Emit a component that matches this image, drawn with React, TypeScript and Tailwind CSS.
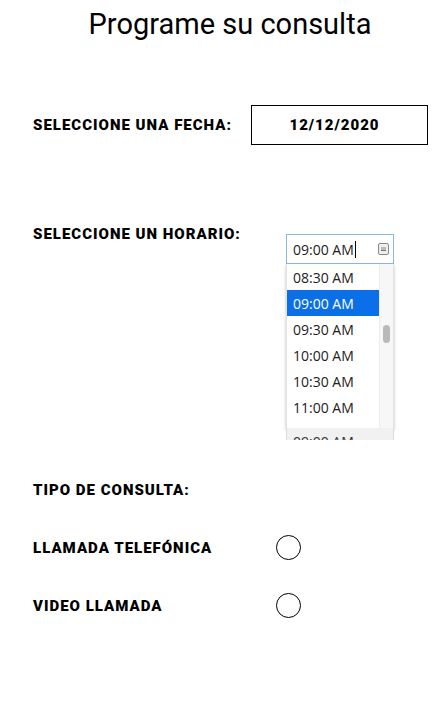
import { useState } from 'react';

const times = ['08:30 AM', '09:00 AM', '09:30 AM', '10:00 AM', '10:30 AM', '11:00 AM'];

const labelClass = "text-[15px] font-black uppercase leading-[18px] text-black tracking-[1px]";

const App = () => {
  const [selected, setSelected] = useState('09:00 AM');
  const [tipo, setTipo] = useState<string | null>(null);

  return (
    <div className="min-h-[704px] w-[446px] bg-white font-['Roboto',sans-serif] text-black">
      <div className="flex h-[48px] items-center justify-center pl-[14px]">
        <h1 className="text-[29px] font-normal leading-none">Programe su consulta</h1>
      </div>

      <div className="mt-[57px] flex h-[40px] items-center pl-[33px]">
        <span className={`${labelClass} w-[218px]`}>Seleccione una fecha:</span>
        <div className="flex h-[40px] w-[177px] items-center justify-center border border-black pr-[10px] text-[15px] font-black tracking-[1px]">
          12/12/2020
        </div>
      </div>

      <div className="mt-[80px] flex items-start pl-[33px]">
        <span className={`${labelClass} w-[253px]`}>Seleccione un horario:</span>
        <div className="mt-[9px] w-[108px] font-['Open_Sans',sans-serif] text-[14px] text-[#222]">
          <div className="flex h-[30px] items-center justify-between border border-[#8db6e6] pl-[6px] pr-[4px]">
            <span className="flex items-center">
              {selected}
              <span className="ml-[1px] inline-block h-[17px] w-[1px] bg-black" />
            </span>
            <span className="flex h-[12px] w-[11px] items-center justify-center rounded-[2px] border border-[#8a8a8a] bg-[#eee]">
              <span className="h-[4px] w-[5px] border-b border-[#777] bg-[#bbb]" />
            </span>
          </div>
          <div className="flex h-[164px] border-x border-[#e3e3e3] bg-white shadow-[0_2px_3px_rgba(0,0,0,0.25)]">
            <ul className="w-[92px]">
              {times.map((t) => (
                <li
                  key={t}
                  onClick={() => setSelected(t)}
                  className={
                    t === selected
                      ? 'flex h-[26px] cursor-default items-center bg-[#0a6fe8] pl-[6px] text-white'
                      : 'flex h-[26px] cursor-default items-center pl-[6px]'
                  }
                >
                  {t}
                </li>
              ))}
            </ul>
            <div className="relative flex-1 border-l border-[#ececec] bg-[#f7f7f7]">
              <div className="absolute left-[3px] top-[61px] h-[18px] w-[7px] rounded-[4px] bg-[#b9b9b9]" />
            </div>
          </div>
          <div className="h-[12px] overflow-hidden border-x border-[#dcdcdc] bg-[#f1f1f1] pl-[6px] pt-[5px] leading-[18px] text-[#333]">
            09:00 AM
          </div>
        </div>
      </div>

      <div className="mt-[38px] pl-[33px]">
        <span className={labelClass}>Tipo de consulta:</span>
      </div>

      <div className="mt-[33px] flex items-center pl-[33px]">
        <span className={`${labelClass} w-[243px]`}>Llamada telefónica</span>
        <button
          onClick={() => setTipo('tel')}
          className="flex h-[25px] w-[25px] items-center justify-center rounded-full border border-black"
        >
          {tipo === 'tel' && <span className="h-[13px] w-[13px] rounded-full bg-black" />}
        </button>
      </div>

      <div className="mt-[33px] flex items-center pl-[33px]">
        <span className={`${labelClass} w-[243px]`}>Video llamada</span>
        <button
          onClick={() => setTipo('video')}
          className="flex h-[25px] w-[25px] items-center justify-center rounded-full border border-black"
        >
          {tipo === 'video' && <span className="h-[13px] w-[13px] rounded-full bg-black" />}
        </button>
      </div>
    </div>
  );
};

export default App;
